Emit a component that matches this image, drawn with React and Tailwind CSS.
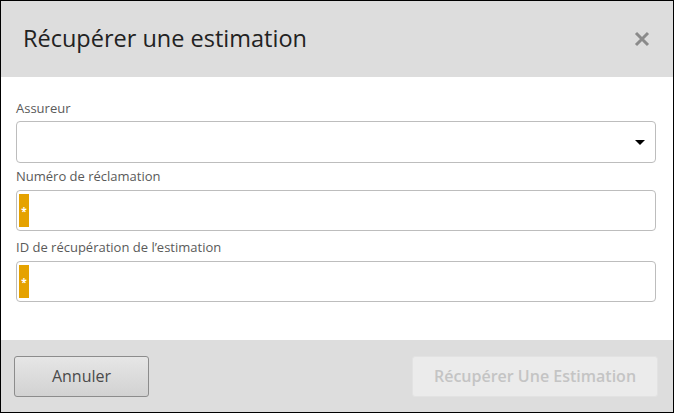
export default function App() {
  const font = { fontFamily: '"Open Sans", "Liberation Sans", sans-serif' };

  const RequiredInput = () => (
    <div className="relative h-[41px] rounded-[4px] border border-[#bdbdbd] bg-white">
      <div className="absolute left-[2px] top-[3px] bottom-[3px] flex w-[10px] items-center justify-center bg-[#e5a200]">
        <span className="text-[10px] font-bold leading-none text-white">*</span>
      </div>
    </div>
  );

  return (
    <div style={font} className="flex h-[413px] w-[674px] flex-col border border-black bg-white">
      {/* Header */}
      <div className="flex h-[76px] shrink-0 items-center justify-between bg-[#dddddd] pl-[22px] pr-[22px]">
        <h1 className="text-[23.5px] leading-none text-[#222]">Récupérer une estimation</h1>
        <svg width="16" height="16" viewBox="0 0 16 16" className="mr-[1px]">
          <path d="M2 2 L14 14 M14 2 L2 14" stroke="#8a8a8a" strokeWidth="3" strokeLinecap="butt" />
        </svg>
      </div>

      {/* Body */}
      <div className="flex-1 pl-[15px] pr-[17px] pt-[22px]">
        <label className="block text-[13px] leading-[18px] text-[#5a5a5a]">Assureur</label>
        <div className="mt-[4px] flex h-[42px] items-center justify-end rounded-[4px] border border-[#bdbdbd] pr-[10px]">
          <div className="h-0 w-0 border-x-[5px] border-t-[5px] border-x-transparent border-t-black" />
        </div>

        <label className="mt-[4px] block text-[13px] leading-[18px] text-[#5a5a5a]">Numéro de réclamation</label>
        <div className="mt-[5px]">
          <RequiredInput />
        </div>

        <label className="mt-[7px] block text-[13px] leading-[18px] text-[#5a5a5a]">ID de récupération de l’estimation</label>
        <div className="mt-[5px]">
          <RequiredInput />
        </div>
      </div>

      {/* Footer */}
      <div className="flex h-[72px] shrink-0 items-center justify-between bg-[#dddddd] pl-[13px] pr-[15px]">
        <button className="h-[41px] w-[135px] rounded-[3px] border border-[#8c8c8c] bg-gradient-to-b from-[#e6e6e6] to-[#d2d2d2] text-[16px] font-medium text-[#4a4a4a]">
          Annuler
        </button>
        <button className="h-[41px] w-[246px] rounded-[3px] border border-[#e2e2e2] bg-[#ebebeb] text-[16px] font-semibold text-[#c4c4c4]">
          Récupérer Une Estimation
        </button>
      </div>
    </div>
  );
}
